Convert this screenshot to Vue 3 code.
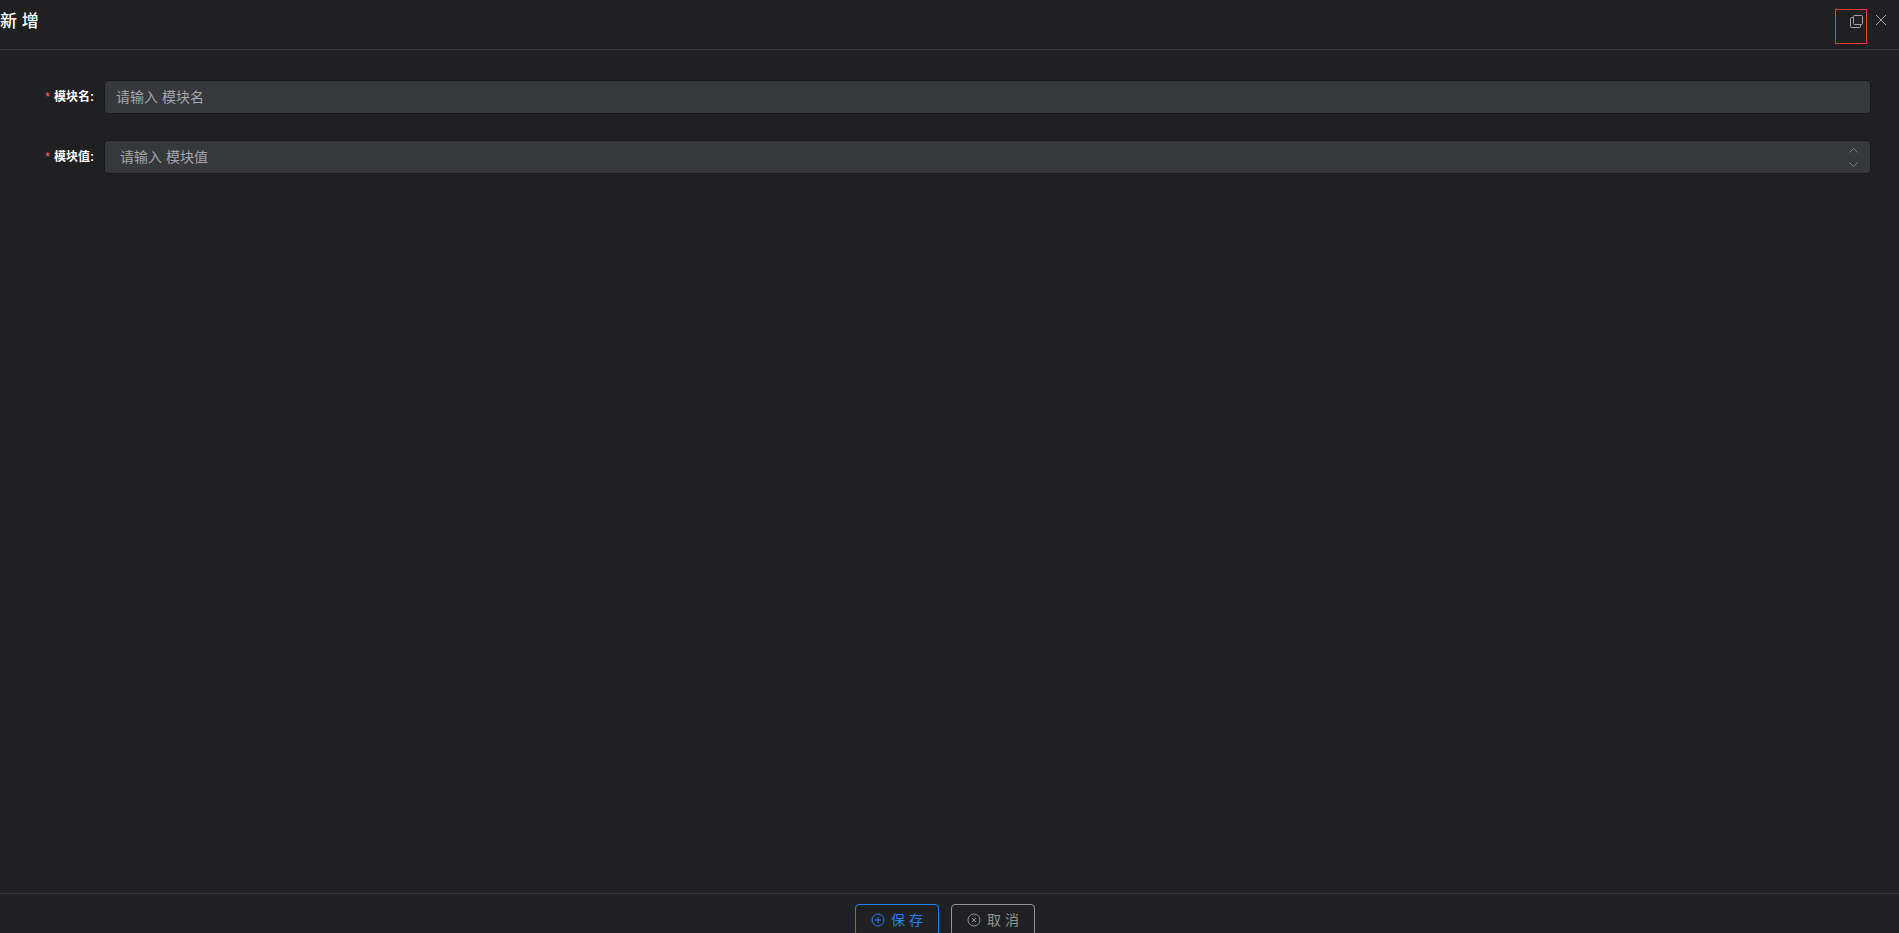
<template>
  <div class="crud-dialog" role="dialog" aria-labelledby="dialog-title">
    <!-- 头部 -->
    <header class="crud-header">
      <h2 id="dialog-title">新 增</h2>
      <div class="crud-tools">
        <button type="button" class="tool-btn tool-full" aria-label="全屏">
          <svg viewBox="0 0 13 13" width="13" height="13" fill="none" stroke="currentColor">
            <rect x="3.5" y="0.5" width="9" height="9" rx="1" />
            <path d="M3.5 2.5H1.5Q0.5 2.5 0.5 3.5V11.5Q0.5 12.5 1.5 12.5H9.5Q10.5 12.5 10.5 11.5V9.5" />
          </svg>
        </button>
        <button type="button" class="tool-btn tool-close" aria-label="关闭">
          <svg viewBox="0 0 12 12" width="12" height="12" fill="none" stroke="currentColor">
            <path d="M1 1L11 11M11 1L1 11" />
          </svg>
        </button>
      </div>
    </header>

    <!-- 表单 -->
    <form id="module-form" class="crud-body" @submit.prevent>
      <div class="form-item">
        <label class="form-label" for="module-name"><span class="required">*</span>模块名:</label>
        <div class="form-control">
          <input id="module-name" v-model="form.name" type="text" placeholder="请输入 模块名" />
        </div>
      </div>
      <div class="form-item">
        <label class="form-label" for="module-value"><span class="required">*</span>模块值:</label>
        <div class="form-control form-number">
          <input
            id="module-value"
            v-model="form.value"
            type="text"
            inputmode="numeric"
            placeholder="请输入 模块值"
          />
          <div class="stepper">
            <button type="button" aria-label="增加" @click="step(1)">
              <svg viewBox="0 0 9 5" width="9" height="5" fill="none" stroke="currentColor">
                <path d="M0.5 4.5L4.5 0.5L8.5 4.5" />
              </svg>
            </button>
            <button type="button" aria-label="减少" @click="step(-1)">
              <svg viewBox="0 0 9 5" width="9" height="5" fill="none" stroke="currentColor">
                <path d="M0.5 0.5L4.5 4.5L8.5 0.5" />
              </svg>
            </button>
          </div>
        </div>
      </div>
    </form>

    <!-- 底部按钮 -->
    <footer class="crud-footer">
      <button type="submit" form="module-form" class="btn btn-primary">
        <svg viewBox="0 0 14 14" width="14" height="14" fill="none" stroke="currentColor">
          <circle cx="7" cy="7" r="6" />
          <path d="M4 7H10M7 4V10" />
        </svg>
        <span>保 存</span>
      </button>
      <button type="button" class="btn">
        <svg viewBox="0 0 14 14" width="14" height="14" fill="none" stroke="currentColor">
          <circle cx="7" cy="7" r="6" />
          <path d="M5 5L9 9M9 5L5 9" />
        </svg>
        <span>取 消</span>
      </button>
    </footer>
  </div>
</template>

<script setup>
import { reactive } from 'vue'

const form = reactive({
  name: '',
  value: ''
})

const step = (n) => {
  form.value = String((Number(form.value) || 0) + n)
}
</script>

<style>
body {
  background: #202022;
}
</style>

<style scoped>
.crud-dialog {
  height: 100vh;
  display: flex;
  flex-direction: column;
  overflow: hidden;
  background: #202022;
  color: #fff;
  font-family: "Liberation Sans", "Noto Sans CJK SC", sans-serif;
}

button,
input {
  font-family: inherit;
}

svg {
  display: block;
  flex-shrink: 0;
}

/* ---- 头部 ---- */
.crud-header {
  flex-shrink: 0;
  box-sizing: border-box;
  height: 50px;
  display: flex;
  align-items: flex-start;
  justify-content: space-between;
  padding: 9px 12px 0 0;
  border-bottom: 1px solid #363637;
}

.crud-header h2 {
  margin: 0;
  font-size: 17px;
  font-weight: 500;
  line-height: 26px;
}

.crud-tools {
  display: flex;
  gap: 8px;
}

.tool-btn {
  padding: 0;
  border: 0;
  background: transparent;
  color: #a3a6ad;
  cursor: pointer;
}

.tool-full {
  box-sizing: border-box;
  width: 32px;
  height: 35px;
  display: flex;
  align-items: flex-start;
  justify-content: flex-end;
  padding: 5px 3px 0 0;
  border: 1px solid #f83a3a;
}

.tool-close {
  height: 22px;
}

/* ---- 表单 ---- */
.crud-body {
  flex: 1;
  min-height: 0;
  display: flex;
  flex-direction: column;
  gap: 26px;
  padding: 30px 28px 0 0;
}

.form-item {
  display: flex;
  align-items: center;
}

.form-label {
  box-sizing: border-box;
  width: 104px;
  padding-right: 10px;
  text-align: right;
  font-size: 12px;
  font-weight: 700;
  line-height: 34px;
}

.required {
  margin-right: 4px;
  color: #f56c6c;
  font-weight: 400;
}

.form-control {
  flex: 1;
  box-sizing: border-box;
  height: 34px;
  display: flex;
  border: 1px solid #18181a;
  border-radius: 4px;
  background: #37383b;
}

.form-control input {
  flex: 1;
  min-width: 0;
  padding: 0 11px;
  border: 0;
  outline: none;
  background: transparent;
  color: #fff;
  font-size: 14px;
}

.form-control input::placeholder {
  color: #a3a6ad;
  opacity: 1;
}

.form-number input {
  padding-left: 15px;
}

.stepper {
  width: 34px;
  display: flex;
  flex-direction: column;
  padding: 2px 0;
}

.stepper button {
  flex: 1;
  display: flex;
  align-items: center;
  justify-content: center;
  padding: 0;
  border: 0;
  background: transparent;
  color: #73767a;
  cursor: pointer;
}

/* ---- 底部 ---- */
.crud-footer {
  flex-shrink: 0;
  box-sizing: border-box;
  height: 40px;
  display: flex;
  justify-content: center;
  align-items: flex-start;
  gap: 12px;
  padding: 10px 9px 0 0;
  border-top: 1px solid #363637;
}

.btn {
  flex-shrink: 0;
  box-sizing: border-box;
  width: 84px;
  height: 32px;
  display: flex;
  align-items: center;
  justify-content: center;
  gap: 6px;
  padding: 0;
  border: 1px solid #909399;
  border-radius: 4px;
  background: transparent;
  color: #909399;
  font-size: 14px;
  cursor: pointer;
}

.btn span {
  padding-bottom: 2px;
}

.btn-primary {
  border-color: #2080ff;
  color: #2080ff;
}
</style>
